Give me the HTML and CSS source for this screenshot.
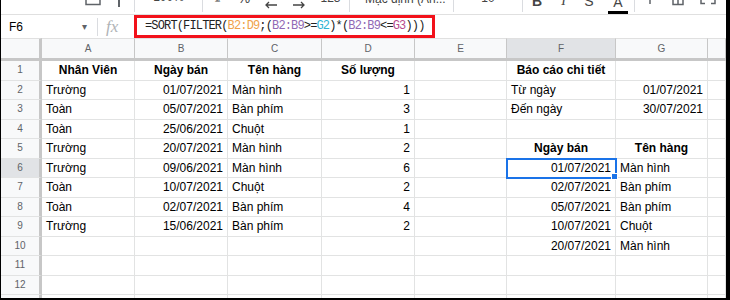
FILE: index.html
```html
<!DOCTYPE html>
<html>
<head>
    <title>Báo cáo chi tiết</title>
    <link rel="stylesheet" href="styles.css">
</head>
<body>
<div class="sheet">
    <!-- toolbar, only its lower edge is visible -->
    <div class="toolbar">
        <div class="tb-row">
            <span class="tb-lead"></span>
            <span class="tb-paint"><svg width="16" height="6"><path d="M1 0V4.5H15V0" fill="none" stroke="#5f6368" stroke-width="1.5"/></svg></span>
            <span class="tb-handle"><svg width="4" height="8"><path d="M2 0V7" stroke="#5f6368" stroke-width="2"/></svg></span>
            <span class="tb-sep"></span>
            <span class="tb-zoom">100%</span>
            <span class="tb-sep"></span>
            <span class="tb-cur">₫</span>
            <span class="tb-pct">%</span>
            <span class="tb-dec"><svg width="14" height="9"><path d="M13 5H2M5 2L2 5L5 8" fill="none" stroke="#444" stroke-width="1.3"/></svg></span>
            <span class="tb-inc"><svg width="14" height="9"><path d="M1 5H12M9 2L12 5L9 8" fill="none" stroke="#444" stroke-width="1.3"/></svg></span>
            <span class="tb-fmt">123</span>
            <span class="tb-sep"></span>
            <span class="tb-font">Mặc định (Ari...</span>
            <span class="tb-sep"></span>
            <span class="tb-size">10</span>
            <span class="tb-sep"></span>
            <span class="tb-b">B</span>
            <span class="tb-i">I</span>
            <span class="tb-s">S</span>
            <span class="tb-a"><span>A</span><span class="tb-bar"></span></span>
            <span class="tb-sep"></span>
            <span class="tb-fill"><svg width="10" height="6"><path d="M5 0V4" stroke="#5f6368" stroke-width="1.5"/></svg></span>
            <span class="tb-border"><svg width="12" height="6"><path d="M1 0V4.5H11V0M6 0V4.5" fill="none" stroke="#5f6368" stroke-width="1.5"/></svg></span>
            <span class="tb-merge"><svg width="16" height="6"><path d="M1 0V3.5H5M15 0V3.5H11" fill="none" stroke="#5f6368" stroke-width="1.5"/></svg></span>
        </div>
    </div>

    <!-- formula bar -->
    <div class="formula-bar">
        <div class="name-box"><span>F6</span><span class="caret">▾</span></div>
        <span class="nb-sep"></span>
        <div class="fx">fx</div>
        <div class="formula">=SORT(FILTER(<span class="ref1">B2:D9</span>;(<span class="ref2">B2:B9</span>&gt;=<span class="ref3">G2</span>)*(<span class="ref2">B2:B9</span>&lt;=<span class="ref4">G3</span>)))</div>
    </div>

    <!-- grid -->
    <div class="row col-heads">
        <div class="corner"></div>
        <div>A</div><div>B</div><div>C</div><div>D</div><div>E</div>
        <div class="sel-head">F</div><div>G</div><div></div>
    </div>
    <div class="row">
        <div class="rh">1</div>
        <div class="hd">Nhân Viên</div><div class="hd">Ngày bán</div><div class="hd">Tên hàng</div><div class="hd">Số lượng</div>
        <div></div><div class="hd">Báo cáo chi tiết</div><div></div><div></div>
    </div>
    <div class="row">
        <div class="rh">2</div>
        <div>Trường</div><div class="num">01/07/2021</div><div>Màn hình</div><div class="num">1</div>
        <div></div><div>Từ ngày</div><div class="num">01/07/2021</div><div></div>
    </div>
    <div class="row">
        <div class="rh">3</div>
        <div>Toàn</div><div class="num">05/07/2021</div><div>Bàn phím</div><div class="num">3</div>
        <div></div><div>Đến ngày</div><div class="num">30/07/2021</div><div></div>
    </div>
    <div class="row">
        <div class="rh">4</div>
        <div>Toàn</div><div class="num">25/06/2021</div><div>Chuột</div><div class="num">1</div>
        <div></div><div></div><div></div><div></div>
    </div>
    <div class="row">
        <div class="rh">5</div>
        <div>Trường</div><div class="num">20/07/2021</div><div>Màn hình</div><div class="num">2</div>
        <div></div><div class="hd">Ngày bán</div><div class="hd">Tên hàng</div><div></div>
    </div>
    <div class="row">
        <div class="rh sel-head">6</div>
        <div>Trường</div><div class="num">09/06/2021</div><div>Màn hình</div><div class="num">6</div>
        <div></div><div class="num active">01/07/2021</div><div>Màn hình</div><div></div>
    </div>
    <div class="row">
        <div class="rh">7</div>
        <div>Toàn</div><div class="num">10/07/2021</div><div>Chuột</div><div class="num">2</div>
        <div></div><div class="num">02/07/2021</div><div>Bàn phím</div><div></div>
    </div>
    <div class="row">
        <div class="rh">8</div>
        <div>Toàn</div><div class="num">02/07/2021</div><div>Bàn phím</div><div class="num">4</div>
        <div></div><div class="num">05/07/2021</div><div>Bàn phím</div><div></div>
    </div>
    <div class="row">
        <div class="rh">9</div>
        <div>Trường</div><div class="num">15/06/2021</div><div>Bàn phím</div><div class="num">2</div>
        <div></div><div class="num">10/07/2021</div><div>Chuột</div><div></div>
    </div>
    <div class="row">
        <div class="rh">10</div>
        <div></div><div></div><div></div><div></div>
        <div></div><div class="num">20/07/2021</div><div>Màn hình</div><div></div>
    </div>
    <div class="row">
        <div class="rh">11</div>
        <div></div><div></div><div></div><div></div><div></div><div></div><div></div><div></div>
    </div>
    <div class="row">
        <div class="rh">12</div>
        <div></div><div></div><div></div><div></div><div></div><div></div><div></div><div></div>
    </div>
    <div class="row">
        <div class="rh">13</div>
        <div></div><div></div><div></div><div></div><div></div><div></div><div></div><div></div>
    </div>
</div>
</body>
</html>
```

FILE: styles.css
```css
body {
    margin: 0;
    background: #fff;
    font-family: "Liberation Sans", Arial, sans-serif;
}

.sheet {
    width: 730px;
    height: 300px;
    box-sizing: border-box;
    border-left: 1px solid #000;
    border-right: 4px solid #000;
    border-bottom: 2px solid #000;
    overflow: hidden;
}

/* toolbar (cut at the top) */
.toolbar {
    height: 14px;
    border-bottom: 1px solid #e0e0e0;
    overflow: hidden;
}

.tb-row {
    display: flex;
    height: 14px;
    color: #444;
    font-size: 14px;
    line-height: 2px;
}

.tb-row > span {
    flex: none;
    display: flex;
    justify-content: center;
    align-items: flex-start;
}

.tb-sep {
    width: 1px;
    height: 12px;
    background: #dadce0;
}

.tb-lead { width: 82px; }
.tb-paint { width: 20px; }
.tb-handle { width: 31px; }
.tb-zoom { width: 67px; font-size: 12px; margin-top: -4px; }
.tb-cur { width: 29px; margin-top: -2px; }
.tb-pct { width: 24px; margin-top: -3px; }
.tb-dec { width: 30px; }
.tb-inc { width: 26px; }
.tb-fmt { width: 37px; font-size: 12px; margin-top: -3px; }
.tb-font { width: 103px; font-size: 12px; margin-top: -2px; justify-content: flex-start !important; padding-left: 15px; box-sizing: border-box; }
.tb-size { width: 68px; font-size: 12px; margin-top: -3px; }
.tb-b { width: 28px; font-weight: bold; }
.tb-i { width: 25px; font-style: italic; font-family: "Liberation Serif", serif; }
.tb-s { width: 26px; }
.tb-a { width: 32px; flex-direction: column; align-items: center !important; }
.tb-fill { width: 30px; }
.tb-border { width: 25px; }
.tb-merge { width: 35px; }

.tb-bar {
    display: block;
    width: 20px;
    height: 3px;
    margin-top: 8px;
    background: #000;
}

/* formula bar */
.formula-bar {
    display: flex;
    align-items: center;
    height: 23px;
}

.name-box {
    display: flex;
    align-items: center;
    width: 96px;
    box-sizing: border-box;
    padding: 0 10px 0 8px;
    font-size: 12px;
    color: #000;
}

.caret {
    margin-left: auto;
    font-size: 10px;
    color: #5f6368;
}

.nb-sep {
    width: 1px;
    height: 18px;
    background: #dadce0;
}

.fx {
    width: 36px;
    padding-left: 8px;
    box-sizing: border-box;
    font-family: "Liberation Serif", serif;
    font-style: italic;
    font-size: 17px;
    color: #b0b3b6;
}

.formula {
    width: 301px;
    height: 23px;
    box-sizing: border-box;
    border: 3px solid #f2111a;
    padding-left: 8px;
    font-family: "Liberation Mono", monospace;
    font-size: 12px;
    letter-spacing: -0.85px;
    line-height: 17px;
    color: #222;
    white-space: nowrap;
}

.ref1 { color: #f0a24a; }
.ref2 { color: #9169b5; }
.ref3 { color: #2fb4d4; }
.ref4 { color: #b84b8e; }

/* grid */
.row {
    display: grid;
    grid-template-columns: 41px 93px 93px 94px 93px 92px 109px 92px 1fr;
    height: 19.5px;
}

.row > div {
    box-sizing: border-box;
    border-right: 1px solid #e2e3e3;
    border-bottom: 1px solid #e2e3e3;
    padding: 0 4px;
    font-size: 12px;
    line-height: 18.5px;
    color: #000;
    white-space: nowrap;
    overflow: hidden;
}

.row > .rh {
    background: #f8f9fa;
    color: #5f6368;
    font-size: 10px;
    text-align: center;
    border-right: 3px solid #c7c7c7;
}

.col-heads {
    height: 23px;
}

.col-heads > div {
    background: #f8f9fa;
    color: #5f6368;
    font-size: 10px;
    line-height: 20px;
    text-align: center;
    border-top: 1px solid #e0e0e0;
    border-right-color: #c7c7c7;
    border-bottom: 3px solid #c7c7c7;
}

.col-heads > .corner {
    border-right: 3px solid #c7c7c7;
}

.row > .sel-head {
    background: #e1e3e6;
}

.hd {
    font-weight: bold;
    text-align: center;
}

.num {
    text-align: right;
}

.row > .active {
    position: relative;
    z-index: 1;
    overflow: visible;
    outline: 2px solid #1a73e8;
    outline-offset: -1px;
}

.active::after {
    content: "";
    position: absolute;
    right: -3px;
    bottom: -3px;
    width: 5px;
    height: 5px;
    background: #1a73e8;
    border: 1px solid #fff;
}
```
